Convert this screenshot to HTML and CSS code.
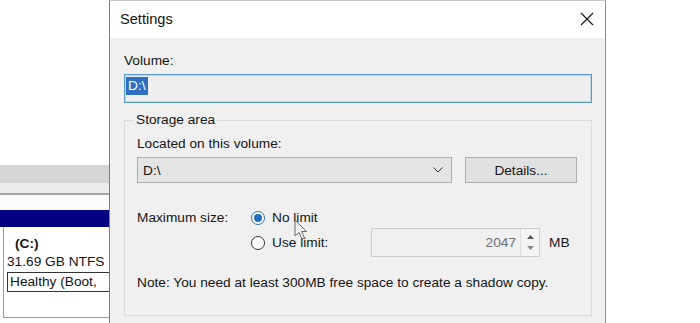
FILE: index.html
```html
<!DOCTYPE html>
<html lang="en">
<head>
    <meta charset="UTF-8">
    <meta name="viewport" content="width=device-width, initial-scale=1.0">
    <title>Settings</title>
    <link rel="stylesheet" href="styles.css">
</head>
<body>
    <div class="screen">
        <div class="backdrop">
            <div class="bd-blank"></div>
            <div class="bd-toolbar"></div>
            <div class="bd-strip"></div>
            <div class="bd-gap"></div>
            <div class="bd-head"></div>
            <div class="bd-part">
                <div class="part-name">(C:)</div>
                <div class="part-size">31.69 GB NTFS</div>
                <div class="part-status"><span>Healthy (Boot,</span></div>
            </div>
        </div>

        <div class="dialog">
            <div class="titlebar">
                <span class="title">Settings</span>
                <svg class="close" width="14" height="14" viewBox="0 0 14 14">
                    <path d="M1 1 L13 13 M13 1 L1 13" stroke="#1a1a1a" stroke-width="1.2" fill="none"/>
                </svg>
            </div>
            <div class="dialog-body">
                <div class="field-label">Volume:</div>
                <div class="textbox"><span class="selected">D:\</span></div>

                <fieldset class="group">
                    <legend>Storage area</legend>
                    <div class="field-label located">Located on this volume:</div>
                    <div class="volume-row">
                        <div class="combo">
                            <span>D:\</span>
                            <svg class="chevron" width="10" height="6" viewBox="0 0 10 6">
                                <path d="M0.5 0.5 L5 5 L9.5 0.5" stroke="#333" stroke-width="1" fill="none"/>
                            </svg>
                        </div>
                        <button class="btn">Details...</button>
                    </div>

                    <div class="size-grid">
                        <span class="size-label">Maximum size:</span>
                        <label class="radio checked"><span class="ring"><span class="dot"></span></span>No limit</label>
                        <label class="radio second"><span class="ring"></span>Use limit:</label>
                        <div class="spin">
                            <span class="spin-value">2047</span>
                            <div class="spin-buttons">
                                <svg width="7" height="4" viewBox="0 0 7 4"><path d="M0 4 L3.5 0 L7 4 Z" fill="#555"/></svg>
                                <svg width="7" height="4" viewBox="0 0 7 4"><path d="M0 0 L3.5 4 L7 0 Z" fill="#8a8a8a"/></svg>
                            </div>
                        </div>
                        <span class="unit">MB</span>
                    </div>

                    <p class="note">Note: You need at least 300MB free space to create a shadow copy.</p>
                </fieldset>
            </div>
        </div>

        <svg class="cursor" width="14" height="22" viewBox="0 0 14 22">
            <path d="M1 1 L1 17 L5 13.5 L8 20 L10.5 19 L7.5 12.5 L12.5 12.5 Z" fill="rgba(245,245,245,0.85)" stroke="#6a6a6a" stroke-width="1"/>
        </svg>
    </div>
</body>
</html>
```

FILE: styles.css
```css
body {
    margin: 0;
    background: #fff;
    font-family: 'Liberation Sans', Arial, sans-serif;
    font-size: 13.7px;
    color: #141414;
}
.screen {
    position: relative;
    display: flex;
    width: 700px;
    height: 323px;
    overflow: hidden;
    background: #fff;
}

/* window behind the dialog */
.backdrop {
    width: 109px;
    flex-shrink: 0;
    display: flex;
    flex-direction: column;
    overflow: hidden;
}
.bd-blank {
    height: 165px;
    background: #fff;
}
.bd-toolbar {
    height: 18px;
    background: #d5d5d5;
}
.bd-strip {
    height: 10px;
    background: #ebebeb;
    border-bottom: 2px solid #a3a3a3;
}
.bd-gap {
    height: 15px;
    background: #fbfbfb;
}
.bd-head {
    height: 17px;
    background: #000080;
}
.bd-part {
    height: 91px;
    box-sizing: border-box;
    margin-left: 3px;
    padding: 8px 0 0 3px;
    border-left: 1px solid #9c9c9c;
    border-bottom: 1px solid #9c9c9c;
    background: #fff;
    white-space: nowrap;
    line-height: 18px;
}
.part-name {
    padding-left: 8px;
    font-weight: bold;
}
.part-status {
    width: 140px;
    margin-top: 1px;
    padding-left: 2px;
    border: 1px solid #333;
    border-right: none;
}

/* dialog */
.dialog {
    width: 497px;
    flex-shrink: 0;
    display: flex;
    flex-direction: column;
    box-sizing: border-box;
    border-left: 1px solid #7d7d7d;
    border-right: 1px solid #8f8f8f;
    border-top: 1px solid #c8c8c8;
    background: #f0f0f0;
}
.titlebar {
    height: 37px;
    display: flex;
    align-items: center;
    justify-content: space-between;
    padding: 0 11px 0 10px;
    background: #fff;
}
.title {
    font-size: 14.6px;
    margin-top: -1px;
}
.close {
    margin-top: -2px;
}
.dialog-body {
    padding: 0 13px 0 14px;
}
.field-label {
    line-height: 16px;
    margin-top: 15px;
}
.textbox {
    height: 29px;
    box-sizing: border-box;
    margin-top: 5px;
    padding: 2px 0 0 1px;
    border: 1px solid #5a9cc6;
    box-shadow: inset 0 0 0 1px #bcd8e8;
    background: #efefef;
}
.selected {
    display: inline-block;
    line-height: 18px;
    padding: 0 2px;
    background: #2e6fc2;
    color: #fff;
}

.group {
    margin: 9px 0 0;
    padding: 0 12px 24px;
    border: 1px solid #dadada;
}
.group legend {
    padding: 0 2px;
    margin-left: -3px;
    line-height: 16px;
}
.located {
    margin-top: 8px;
}
.volume-row {
    display: flex;
    gap: 13px;
    margin-top: 5px;
}
.combo {
    width: 315px;
    height: 26px;
    box-sizing: border-box;
    display: flex;
    align-items: center;
    justify-content: space-between;
    padding: 0 8px 0 5px;
    border: 1px solid #adadad;
    background: #e4e4e4;
}
.btn {
    width: 112px;
    height: 26px;
    border: 1px solid #adadad;
    background: #e1e1e1;
    font-family: inherit;
    font-size: 13.7px;
    color: #141414;
    padding: 0;
}

.size-grid {
    display: grid;
    grid-template-columns: 114px 120px 169px auto;
    grid-template-rows: 21px 29px;
    align-items: center;
    margin-top: 24px;
}
.size-label {
    grid-column: 1;
    grid-row: 1;
}
.radio {
    display: flex;
    align-items: center;
    gap: 7px;
    grid-column: 2;
    white-space: nowrap;
}
.radio.checked {
    grid-row: 1;
}
.radio.second {
    grid-row: 2;
}
.ring {
    width: 14px;
    height: 14px;
    box-sizing: border-box;
    border: 1px solid #333;
    border-radius: 50%;
    background: #fff;
    display: flex;
    align-items: center;
    justify-content: center;
}
.radio.checked .ring {
    border-color: #2a6fb8;
}
.dot {
    width: 8px;
    height: 8px;
    border-radius: 50%;
    background: #1f6fc0;
}
.spin {
    grid-column: 3;
    grid-row: 2;
    height: 29px;
    box-sizing: border-box;
    display: flex;
    border: 1px solid #cdcdcd;
    background: #f0f0f0;
}
.spin-value {
    flex: 1;
    text-align: right;
    padding-right: 4px;
    line-height: 27px;
    color: #6d6d6d;
}
.spin-buttons {
    width: 18px;
    display: flex;
    flex-direction: column;
    align-items: center;
    justify-content: space-around;
    padding: 3px 0;
    border-left: 1px solid #dedede;
    background: #f4f4f4;
}
.unit {
    grid-column: 4;
    grid-row: 2;
    margin-left: 9px;
}
.note {
    margin: 18px 0 0;
    line-height: 16px;
}

.cursor {
    position: absolute;
    left: 294px;
    top: 219px;
}
```
